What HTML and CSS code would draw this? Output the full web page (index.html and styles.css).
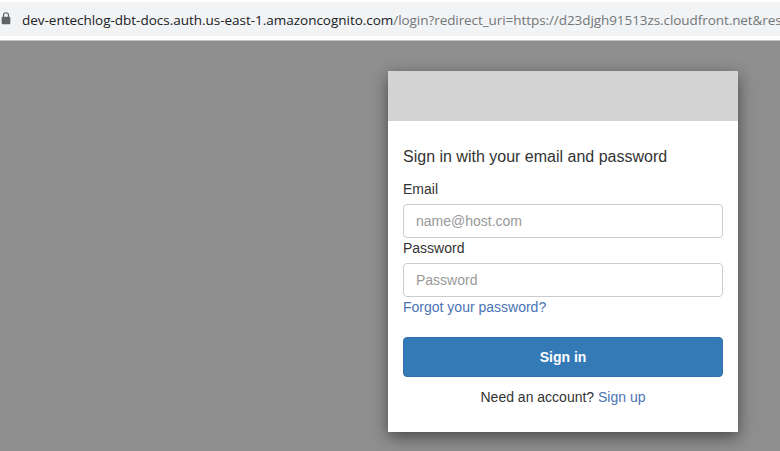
FILE: index.html
```html
<!DOCTYPE html>
<html lang="en">
<head>
<meta charset="utf-8">
<title>Sign in</title>
<link rel="stylesheet" href="styles.css">
</head>
<body>
<header class="address-bar">
  <svg class="lock" viewBox="0 0 9 12" aria-hidden="true"><path d="M2.200 5V3a2.300 2.300 0 0 1 4.600 0v2" fill="none" stroke="#5f6368" stroke-width="1.100"/><path fill="#5f6368" d="M1.500 4.300h6a1 1 0 0 1 1 1V10.300a1 1 0 0 1-1 1h-6a1 1 0 0 1-1-1V5.300a1 1 0 0 1 1-1z"/></svg>
  <div class="url"><span class="host">dev-entechlog-dbt-docs.auth.us-east-1.amazoncognito.com</span><span class="path">/login?redirect_uri=https://d23djgh91513zs.cloudfront.net&amp;res</span></div>
</header>
<main class="page">
  <section class="modal">
    <div class="banner"></div>
    <form class="form">
      <h1 class="title">Sign in with your email and password</h1>
      <label class="label" for="email">Email</label>
      <input class="input" id="email" type="email" placeholder="name@host.com">
      <label class="label" for="password">Password</label>
      <input class="input" id="password" type="password" placeholder="Password">
      <a class="link forgot" href="#">Forgot your password?</a>
      <button class="submit" type="button">Sign in</button>
      <p class="signup">Need an account? <a class="link" href="#">Sign up</a></p>
    </form>
  </section>
</main>
</body>
</html>
```
FILE: styles.css
```css
* { box-sizing: border-box; }
body {
  margin: 0;
  height: 451px;
  overflow: hidden;
  display: flex;
  flex-direction: column;
  font: 14px/20px "Liberation Sans", Arial, sans-serif;
  color: #333;
}
.address-bar {
  flex: none;
  height: 41px;
  padding: 0 0 1px 1px;
  display: flex;
  align-items: center;
  background: linear-gradient(#fff 0 2px, #f1f3f4 2px 36px, #fff 36px);
  border-bottom: 1px solid #c4c4c4;
}
.lock { flex: none; width: 10px; height: 13px; margin: 0 11px 2px 0; }
.url {
  white-space: nowrap;
  font-family: "Open Sans", sans-serif;
  font-size: 13.5px;
}
.host { color: #202124; letter-spacing: -.02px; }
.path { color: #72767a; letter-spacing: -.07px; }
.page {
  flex: 1;
  display: flex;
  padding: 30px 42px 0 388px;
  background: #8f8f8f;
}
.modal {
  width: 350px;
  height: 361px;
  background: #fff;
  box-shadow: 0 5px 15px rgba(0, 0, 0, .5);
}
.banner { height: 50px; background: #d3d3d3; }
.form { padding: 26px 15px 0; display: flex; flex-direction: column; }
.title { margin: 0 0 12px; font-size: 16px; line-height: 20px; font-weight: 400; }
.label { height: 20px; margin-bottom: 5px; }
.input {
  height: 34px;
  padding: 6px 12px;
  border: 1px solid #ccc;
  border-radius: 4px;
  font: inherit;
}
.input::placeholder { color: #999; }
.link { color: #4a73b4; text-decoration: none; }
.submit {
  height: 40px;
  margin-top: 20px;
  border: 1px solid #316fad;
  border-radius: 4px;
  background: #337ab7;
  color: #fff;
  font: bold 14px/20px "Liberation Sans", Arial, sans-serif;
}
.signup { margin: 10px 0 0; text-align: center; }
```
